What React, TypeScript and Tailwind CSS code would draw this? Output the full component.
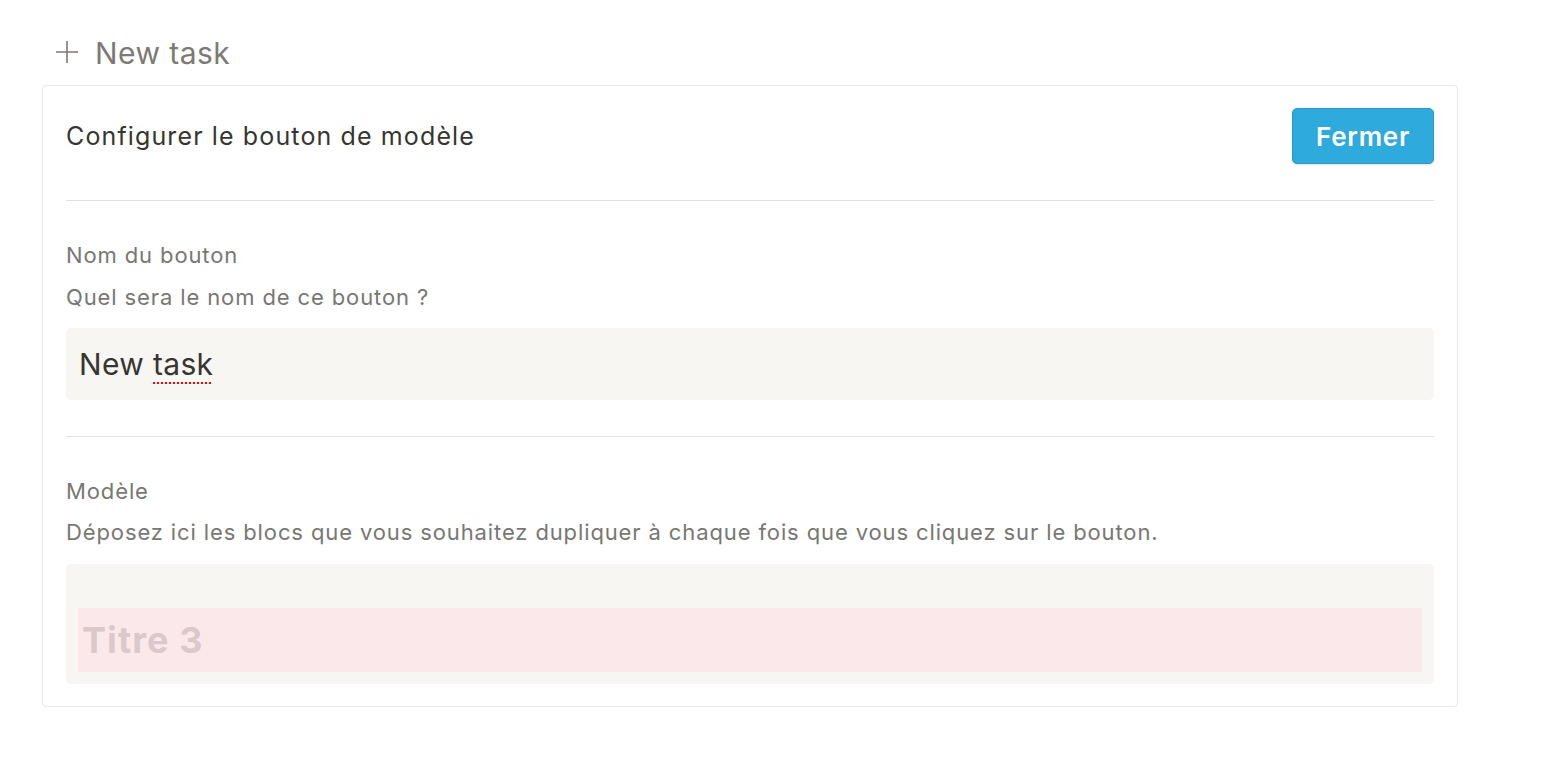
export default function App() {
  return (
    <div
      className="min-h-screen bg-white pl-[42px] pr-[108px] pt-[30px]"
      style={{ fontFamily: "Inter, 'Noto Sans', sans-serif" }}
    >
      <div className="flex h-[44px] items-center gap-[16px] pl-[13px] text-[#7d7a75]">
        <svg width="24" height="24" viewBox="0 0 24 24" fill="none" stroke="currentColor" strokeWidth="1.6">
          <path d="M12 1v22M1 12h22" />
        </svg>
        <span className="mt-[2px] text-[30px] leading-none tracking-[0.015em]">New task</span>
      </div>

      <div className="mt-[11px] rounded-[4px] border border-[#e7e7e5] px-[23px] pb-[22px] pt-[22px]">
        <div className="flex items-center justify-between">
          <span className="mt-[2px] text-[25px] tracking-[0.045em] text-[#37352f]">Configurer le bouton de modèle</span>
          <button className="h-[56px] w-[142px] rounded-[5px] border border-[#2a9ccb] bg-[#2eaadc] text-[26px] font-semibold tracking-[0.03em] text-white shadow-sm">
            Fermer
          </button>
        </div>

        <div className="mt-[36px] h-px bg-[#e1e1df]" />

        <div className="mt-[40px] text-[22px] leading-[28px] tracking-[0.04em] text-[#787774]">Nom du bouton</div>
        <div className="mt-[14px] text-[22px] leading-[28px] tracking-[0.04em] text-[#787774]">Quel sera le nom de ce bouton ?</div>
        <div className="mt-[17px] flex h-[72px] items-center rounded-[5px] bg-[#f7f6f3] px-[13px] text-[30px] tracking-[0.01em] text-[#37352f]">
          New
          <span className="ml-[9px] underline decoration-dotted decoration-[#ff0000] decoration-2 underline-offset-[8px]">
            task
          </span>
        </div>

        <div className="mt-[36px] h-px bg-[#e1e1df]" />

        <div className="mt-[40px] text-[22px] leading-[28px] tracking-[0.04em] text-[#787774]">Modèle</div>
        <div className="mt-[13px] text-[22px] leading-[28px] tracking-[0.04em] text-[#787774]">
          Déposez ici les blocs que vous souhaitez dupliquer à chaque fois que vous cliquez sur le bouton.
        </div>
        <div className="mt-[18px] rounded-[5px] bg-[#f7f6f3] px-[12px] pb-[12px] pt-[44px]">
          <div className="flex h-[64px] items-center bg-[#fbe8ea] px-[4px] text-[36px] font-bold tracking-[0.03em] text-[#dac8ca]">
            Titre 3
          </div>
        </div>
      </div>
    </div>
  );
}
